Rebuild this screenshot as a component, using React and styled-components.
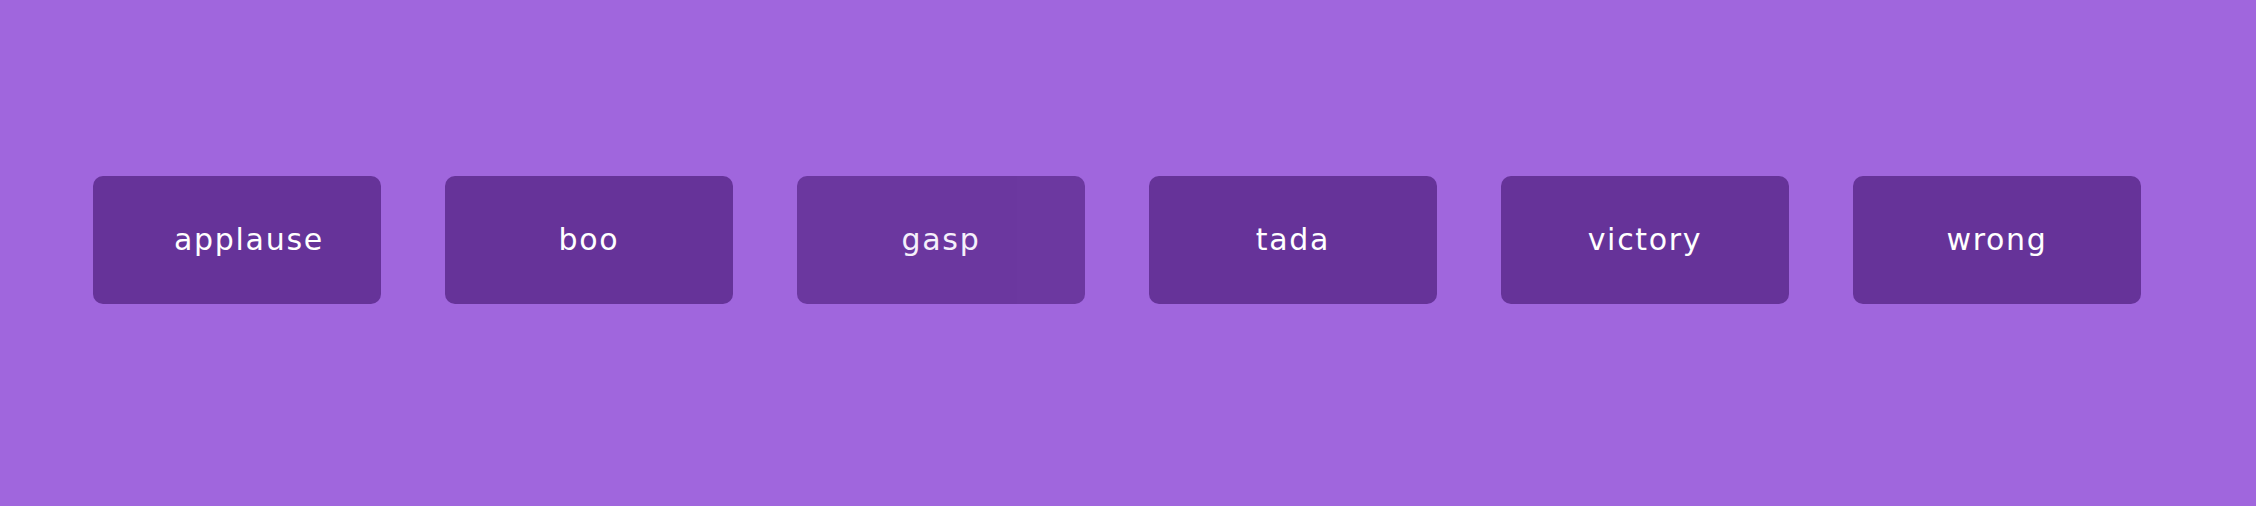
import React from "react";
import styled, { createGlobalStyle } from "styled-components";

const Global = createGlobalStyle`
  html, body {
    margin: 0;
    padding: 0;
    background: #a066dd;
  }
  body {
    font-family: "DejaVu Sans", "Noto Sans", sans-serif;
  }
`;

const Page = styled.main`
  min-height: 100vh;
  box-sizing: border-box;
  background: #a066dd;
  padding: 176px 0 0 93px;
`;

const Row = styled.div`
  display: flex;
  gap: 64px;
  align-items: center;
`;

const SoundButton = styled.button`
  width: 288px;
  height: 128px;
  flex: none;
  box-sizing: border-box;
  padding: 0 81px;
  border: none;
  border-radius: 10px;
  background: #663399;
  color: #ffffff;
  font-family: "DejaVu Sans", "Noto Sans", sans-serif;
  font-size: 30px;
  font-weight: 400;
  letter-spacing: 1.7px;
  white-space: nowrap;
  display: flex;
  align-items: center;
  cursor: pointer;
  opacity: ${(p) => (p.$active ? 0.9 : 1)};
`;

const Label = styled.span`
  display: block;
  flex: 1 1 auto;
  min-width: 0;
  text-align: center;
  line-height: 1;
  overflow: visible;
`;

const sounds = ["applause", "boo", "gasp", "tada", "victory", "wrong"];

export default function App() {
  return (
    <>
      <Global />
      <Page>
        <Row>
          {sounds.map((s) => (
            <SoundButton key={s} $active={s === "gasp"}>
              <Label>{s}</Label>
            </SoundButton>
          ))}
        </Row>
      </Page>
    </>
  );
}
